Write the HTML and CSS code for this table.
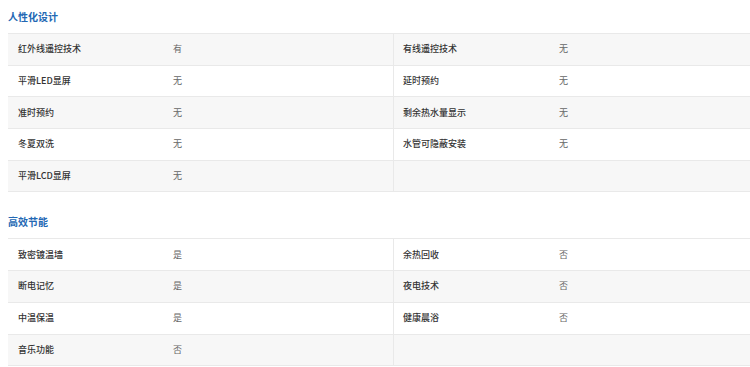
FILE: index.html
```html
<!DOCTYPE html>
<html lang="zh-CN">
<head>
<meta charset="utf-8">
<title>参数</title>
<link rel="stylesheet" href="styles.css">
</head>
<body>
<div class="page">
  <section class="section">
    <h3 class="section-title">人性化设计</h3>
    <table class="spec">
      <tr class="odd"><td class="k">红外线遥控技术</td><td class="v">有</td><td class="k div">有线遥控技术</td><td class="v">无</td></tr>
      <tr><td class="k">平滑LED显屏</td><td class="v">无</td><td class="k div">延时预约</td><td class="v">无</td></tr>
      <tr class="odd"><td class="k">准时预约</td><td class="v">无</td><td class="k div">剩余热水量显示</td><td class="v">无</td></tr>
      <tr><td class="k">冬夏双洗</td><td class="v">无</td><td class="k div">水管可隐蔽安装</td><td class="v">无</td></tr>
      <tr class="odd"><td class="k">平滑LCD显屏</td><td class="v">无</td><td class="k div"></td><td class="v"></td></tr>
    </table>
  </section>
  <section class="section">
    <h3 class="section-title">高效节能</h3>
    <table class="spec">
      <tr><td class="k">致密镀温墙</td><td class="v">是</td><td class="k div">余热回收</td><td class="v">否</td></tr>
      <tr class="odd"><td class="k">断电记忆</td><td class="v">是</td><td class="k div">夜电技术</td><td class="v">否</td></tr>
      <tr><td class="k">中温保温</td><td class="v">是</td><td class="k div">健康晨浴</td><td class="v">否</td></tr>
      <tr class="odd"><td class="k">音乐功能</td><td class="v">否</td><td class="k div"></td><td class="v"></td></tr>
    </table>
  </section>
</div>
</body>
</html>
```
FILE: styles.css
```css
html, body {
  margin: 0;
  padding: 0;
  background: #fff;
  overflow: hidden;
}
body {
  font-family: "Noto Sans CJK SC", "Noto Sans", sans-serif;
}
.page {
  padding: 8px 0 0 8px;
  width: 770px;
}
.section + .section {
  margin-top: 21px;
}
.section-title {
  margin: 0 0 7px 0;
  font-size: 10px;
  line-height: 18px;
  font-weight: bold;
  color: #2368b4;
}
.spec {
  width: 770px;
  border-collapse: collapse;
  table-layout: fixed;
  border-top: 1px solid #e9e9e9;
}
.spec tr {
  height: 31.7px;
  border-bottom: 1px solid #e9e9e9;
}
.spec tr.odd {
  background: #f7f7f7;
}
.spec td {
  padding: 0;
  font-size: 9px;
  line-height: 12px;
  vertical-align: middle;
  white-space: nowrap;
}
.spec td.k {
  width: 155px;
  padding-left: 10px;
  color: #333;
  font-weight: 500;
}
.spec td.k.div {
  width: 156px;
  padding-left: 9px;
  border-left: 1px solid #e9e9e9;
}
.spec td.v {
  width: 220px;
  color: #666;
}
```
